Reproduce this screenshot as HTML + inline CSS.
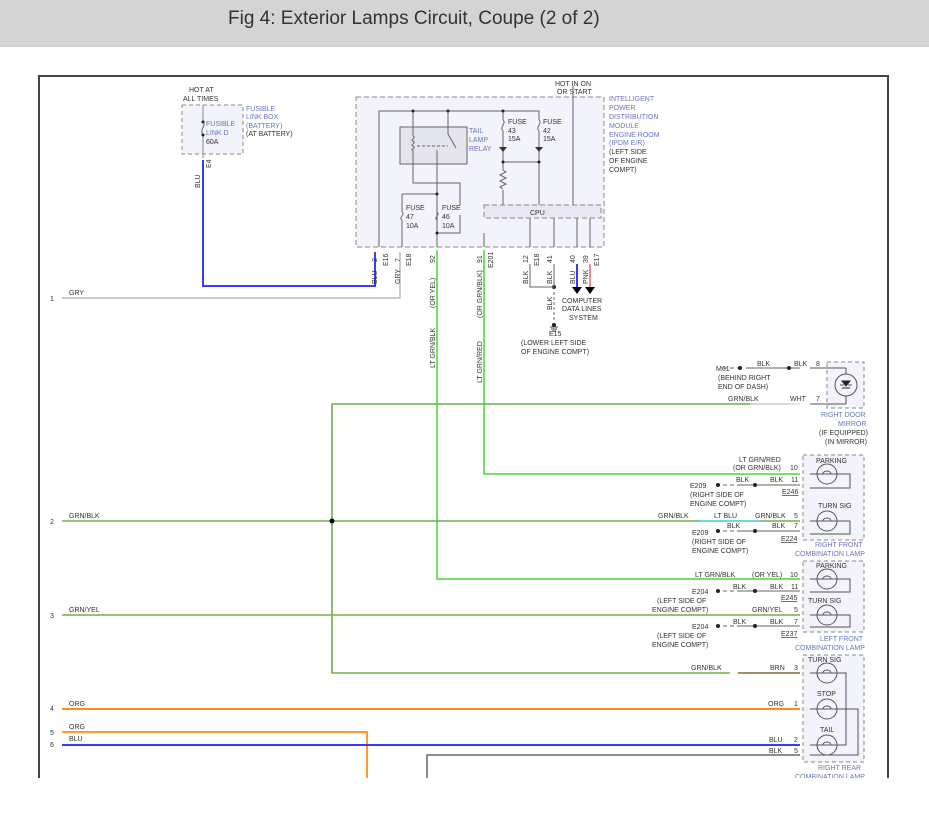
<!DOCTYPE html>
<html><head><meta charset="utf-8"><style>
body{margin:0;background:#fff;width:929px;height:814px;overflow:hidden;font-family:"Liberation Sans",sans-serif}
.hd{position:absolute;left:0;top:0;width:929px;height:47px;background:#d4d4d4}
.hd span{position:absolute;left:228px;top:8px;font-size:19px;color:#333}
svg{position:absolute;left:0;top:0}
text{font-family:"Liberation Sans",sans-serif;font-size:7px;fill:#333}
.b{fill:#6677bb}
</style></head><body>
<div class="hd"><span>Fig 4: Exterior Lamps Circuit, Coupe (2 of 2)</span></div>
<svg width="929" height="814" viewBox="0 0 929 814">
<rect x="39" y="76" width="849" height="720" fill="none" stroke="#444" stroke-width="2"/>
<rect x="0" y="778" width="929" height="40" fill="#fff"/>
<!-- fusible link box -->
<rect x="182" y="105" width="61" height="49" fill="#f3f3fb" stroke="#888" stroke-dasharray="4,3"/>
<text x="189" y="92">HOT AT</text><text x="183" y="101">ALL TIMES</text>
<text class="b" x="246" y="111">FUSIBLE</text><text class="b" x="246" y="119">LINK BOX</text><text class="b" x="246" y="128">(BATTERY)</text><text x="246" y="136">(AT BATTERY)</text>
<text class="b" x="206" y="126">FUSIBLE</text><text class="b" x="206" y="135">LINK D</text><text x="206" y="144">60A</text>
<path d="M203 105V122M203 135V158" stroke="#888" fill="none"/>
<path d="M203 122c4 3 -4 7 0 13" stroke="#666" fill="none"/>
<circle cx="203" cy="122" r="1.5" fill="#222"/><circle cx="203" cy="135" r="1.5" fill="#222"/>
<path d="M203 160V286H375V252" stroke="#3a3aff" stroke-width="2" fill="none"/>
<text x="0" y="0" transform="translate(200,188) rotate(-90)">BLU</text>
<text x="0" y="0" transform="translate(211,168) rotate(-90)">E4</text>
<!-- GRY -->
<path d="M62 298H400V252" stroke="#bbb" stroke-width="1.5" fill="none"/>
<text x="50" y="301">1</text><text x="69" y="295">GRY</text>
<!-- IPDM -->
<rect x="356" y="97" width="248" height="150" fill="#f3f3fb" stroke="#888" stroke-dasharray="5,3"/>
<text x="555" y="86">HOT IN ON</text><text x="557" y="94">OR START</text>
<text class="b" x="609" y="101">INTELLIGENT</text><text class="b" x="609" y="110">POWER</text><text class="b" x="609" y="119">DISTRIBUTION</text><text class="b" x="609" y="128">MODULE</text><text class="b" x="609" y="137">ENGINE ROOM</text><text class="b" x="609" y="145">(IPDM E/R)</text><text x="609" y="154">(LEFT SIDE</text><text x="609" y="163">OF ENGINE</text><text x="609" y="172">COMPT)</text>
<rect x="400" y="127" width="67" height="37" fill="#e4e4ee" stroke="#666"/>
<g stroke="#666" fill="none">
<path d="M379 247V111H539V120M539 131V205M413 111V136M413 150V183H460V205M448 111V134M503 111V120M503 131V170M503 190V205M573 86V205M503 162H539"/>
<path d="M413 136c4 2 -4 4 0 5c4 2 -4 4 0 5c4 2 -4 4 0 4"/>
<path d="M417 146H448" stroke-dasharray="3,2"/>
<path d="M448 134L456 148"/>
<path d="M437 150V194M437 183"/>
<path d="M503 170l3 2l-6 3l6 3l-6 3l6 3l-6 3l3 2"/>
<path d="M402 194H437V247M402 194V212M402 220V247M437 194V212M437 220V233M437 233H460V215M530 218V247M554 218V247M577 218V247M590 218V247M484 233V247"/>
<path d="M503 120c4 3 -4 7 0 11M539 120c4 3 -4 7 0 11M402 212c4 3 -4 5 0 8M437 212c4 3 -4 5 0 8"/>
</g>
<path d="M499 147h8l-4 5zM535 147h8l-4 5z" fill="#333"/>
<rect x="484" y="205" width="117" height="13" fill="#e8e8f4" stroke="#888" stroke-dasharray="5,3"/>
<text x="530" y="215">CPU</text>
<text class="b" x="469" y="133">TAIL</text><text class="b" x="469" y="142">LAMP</text><text class="b" x="469" y="151">RELAY</text>
<text x="508" y="124">FUSE</text><text x="508" y="133">43</text><text x="508" y="141">15A</text>
<text x="543" y="124">FUSE</text><text x="543" y="133">42</text><text x="543" y="141">15A</text>
<text x="406" y="210">FUSE</text><text x="406" y="219">47</text><text x="406" y="228">10A</text>
<text x="442" y="210">FUSE</text><text x="442" y="219">46</text><text x="442" y="228">10A</text>
<g fill="#222"><circle cx="413" cy="111" r="1.5"/><circle cx="448" cy="111" r="1.5"/><circle cx="503" cy="111" r="1.5"/><circle cx="437" cy="194" r="1.5"/><circle cx="437" cy="233" r="1.5"/><circle cx="554" cy="287" r="2"/><circle cx="554" cy="325" r="2"/><circle cx="503" cy="162" r="1.5"/><circle cx="539" cy="162" r="1.5"/></g>
<g font-size="7">
<text transform="translate(377,262) rotate(-90)">2</text><text transform="translate(388,266) rotate(-90)">E16</text>
<text transform="translate(400,262) rotate(-90)">7</text><text transform="translate(411,266) rotate(-90)">E18</text>
<text transform="translate(435,263) rotate(-90)">92</text>
<text transform="translate(482,263) rotate(-90)">91</text><text transform="translate(493,268) rotate(-90)">E201</text>
<text transform="translate(528,263) rotate(-90)">12</text><text transform="translate(539,266) rotate(-90)">E18</text>
<text transform="translate(552,263) rotate(-90)">41</text><text transform="translate(575,263) rotate(-90)">40</text>
<text transform="translate(588,263) rotate(-90)">39</text><text transform="translate(599,266) rotate(-90)">E17</text>
<text transform="translate(377,284) rotate(-90)">BLU</text><text transform="translate(400,284) rotate(-90)">GRY</text>
<text transform="translate(435,308) rotate(-90)">(OR YEL)</text><text transform="translate(482,318) rotate(-90)">(OR GRN/BLK)</text>
<text transform="translate(435,368) rotate(-90)">LT GRN/BLK</text><text transform="translate(482,383) rotate(-90)">LT GRN/RED</text>
<text transform="translate(528,284) rotate(-90)">BLK</text><text transform="translate(552,284) rotate(-90)">BLK</text>
<text transform="translate(575,284) rotate(-90)">BLU</text><text transform="translate(588,284) rotate(-90)">PNK</text>
<text transform="translate(552,310) rotate(-90)">BLK</text>
</g>
<path d="M530 264V287H554M554 264V287" stroke="#666" fill="none"/>
<path d="M554 292V320" stroke="#666" stroke-dasharray="3,2"/>
<path d="M550 327h8M551 329h6M552 331h4" stroke="#444"/>
<path d="M577 264V287" stroke="#3a3aff" stroke-width="2"/><path d="M590 264V287" stroke="#f08ca0" stroke-width="2"/>
<path d="M572 287h10l-5 7zM585 287h10l-5 7z" fill="#000"/>
<text x="562" y="303">COMPUTER</text><text x="562" y="311">DATA LINES</text><text x="569" y="320">SYSTEM</text>
<text x="549" y="336">E15</text><text x="521" y="345">(LOWER LEFT SIDE</text><text x="521" y="354">OF ENGINE COMPT)</text>
<!-- green wires -->
<path d="M437 250V579H800" stroke="#66dd55" stroke-width="1.8" fill="none"/>
<path d="M484 250V474H800" stroke="#66dd55" stroke-width="1.8" fill="none"/>
<path d="M332 404V673H730M332 404H790M62 521H800M62 615H800" stroke="#6bb04a" stroke-width="1.6" fill="none"/>
<circle cx="332" cy="521" r="2.5" fill="#000"/>
<path d="M738 673H800" stroke="#8a6a30" stroke-width="1.5"/>
<path d="M62 709H800" stroke="#ff8c1a" stroke-width="2"/>
<path d="M62 732H367V778" stroke="#ff9a33" stroke-width="2" fill="none"/>
<path d="M62 745H800" stroke="#3a3aff" stroke-width="2"/>
<path d="M427 778V755H800" stroke="#666" stroke-width="1.5" fill="none"/>
<g>
<text x="50" y="524">2</text><text x="69" y="518">GRN/BLK</text>
<text x="50" y="618">3</text><text x="69" y="612">GRN/YEL</text>
<text x="50" y="711">4</text><text x="69" y="706">ORG</text>
<text x="50" y="735">5</text><text x="69" y="729">ORG</text>
<text x="50" y="747">6</text><text x="69" y="741">BLU</text>
</g>
<!-- right side -->
<g stroke="#666" fill="none">
<path d="M746 368H800M740 485H800M740 531H800M740 591H800M740 626H800"/>
<path d="M723 368h20M723 485h20M723 531h20M723 591h20M723 626h20" stroke-dasharray="4,3"/>
</g>
<path d="M750 404H800" stroke="#ddd" stroke-width="1.5"/>
<path d="M700 521H760" stroke="#55ddee" stroke-width="1.5"/>
<g fill="#222"><circle cx="789" cy="368" r="2"/><circle cx="755" cy="485" r="2"/><circle cx="755" cy="531" r="2"/><circle cx="755" cy="591" r="2"/><circle cx="755" cy="626" r="2"/><circle cx="740" cy="368" r="2"/><circle cx="718" cy="485" r="2"/><circle cx="718" cy="531" r="2"/><circle cx="718" cy="591" r="2"/><circle cx="718" cy="626" r="2"/></g>
<g fill="#f3f3fb" stroke="#888" stroke-dasharray="4,3">
<rect x="827" y="362" width="37" height="46"/><rect x="803" y="455" width="61" height="85"/><rect x="803" y="561" width="61" height="71"/><rect x="803" y="655" width="61" height="107"/>
</g>
<g fill="none" stroke="#555">
<circle cx="846" cy="385" r="11"/><path d="M846 368V374M846 396V404M810 368H846M810 404H846M840 385h4M848 385h4"/>
<circle cx="827" cy="474" r="10"/><circle cx="827" cy="521" r="10"/><circle cx="827" cy="579" r="10"/><circle cx="827" cy="615" r="10"/>
<circle cx="827" cy="673" r="10"/><circle cx="827" cy="709" r="10"/><circle cx="827" cy="745" r="10"/>
<path d="M818 474h5c0-4 8-4 8 0h5M818 521h5c0-4 8-4 8 0h5M818 579h5c0-4 8-4 8 0h5M818 615h5c0-4 8-4 8 0h5M818 673h5c0-4 8-4 8 0h5M818 709h5c0-4 8-4 8 0h5M818 745h5c0-4 8-4 8 0h5"/>
<path d="M810 474H850V488H810M810 521H850V534H810M810 579H850V592H810M810 615H850V627H810"/>
<path d="M810 673H846V745H810M810 709H858V755H810"/>
</g>
<path d="M842 381l4 5l4-5zM842 388h8" fill="#222" stroke="#222"/>
<g>
<text x="757" y="366">BLK</text><text x="794" y="366">BLK</text><text x="816" y="366">8</text>
<text x="716" y="371">M61</text><text x="718" y="380">(BEHIND RIGHT</text><text x="718" y="389">END OF DASH)</text>
<text x="728" y="401">GRN/BLK</text><text x="790" y="401">WHT</text><text x="816" y="401">7</text>
<text class="b" x="821" y="417">RIGHT DOOR</text><text class="b" x="838" y="426">MIRROR</text><text x="819" y="435">(IF EQUIPPED)</text><text x="825" y="444">(IN MIRROR)</text>
<text x="739" y="462">LT GRN/RED</text><text x="733" y="470">(OR GRN/BLK)</text><text x="790" y="470">10</text>
<text x="816" y="463">PARKING</text>
<text x="736" y="482">BLK</text><text x="770" y="482">BLK</text><text x="791" y="482">11</text>
<text x="690" y="488">E209</text><text x="690" y="497">(RIGHT SIDE OF</text><text x="690" y="506">ENGINE COMPT)</text><text x="782" y="494" text-decoration="underline">E246</text>
<text x="818" y="508">TURN SIG</text>
<text x="658" y="518">GRN/BLK</text><text x="714" y="518">LT BLU</text><text x="755" y="518">GRN/BLK</text><text x="794" y="518">5</text>
<text x="727" y="528">BLK</text><text x="772" y="528">BLK</text><text x="794" y="528">7</text>
<text x="692" y="535">E209</text><text x="692" y="544">(RIGHT SIDE OF</text><text x="692" y="553">ENGINE COMPT)</text><text x="781" y="541" text-decoration="underline">E224</text>
<text class="b" x="815" y="547">RIGHT FRONT</text><text class="b" x="795" y="556">COMBINATION LAMP</text>
<text x="816" y="568">PARKING</text>
<text x="695" y="577">LT GRN/BLK</text><text x="752" y="577">(OR YEL)</text><text x="790" y="577">10</text>
<text x="733" y="589">BLK</text><text x="770" y="589">BLK</text><text x="791" y="589">11</text>
<text x="692" y="594">E204</text><text x="657" y="603">(LEFT SIDE OF</text><text x="652" y="612">ENGINE COMPT)</text><text x="781" y="600" text-decoration="underline">E245</text>
<text x="808" y="603">TURN SIG</text>
<text x="752" y="612">GRN/YEL</text><text x="794" y="612">5</text>
<text x="733" y="624">BLK</text><text x="770" y="624">BLK</text><text x="794" y="624">7</text>
<text x="692" y="629">E204</text><text x="657" y="638">(LEFT SIDE OF</text><text x="652" y="647">ENGINE COMPT)</text><text x="781" y="636" text-decoration="underline">E237</text>
<text class="b" x="820" y="641">LEFT FRONT</text><text class="b" x="795" y="650">COMBINATION LAMP</text>
<text x="808" y="662">TURN SIG</text>
<text x="691" y="670">GRN/BLK</text><text x="770" y="670">BRN</text><text x="794" y="670">3</text>
<text x="817" y="696">STOP</text>
<text x="768" y="706">ORG</text><text x="794" y="706">1</text>
<text x="820" y="732">TAIL</text>
<text x="769" y="742">BLU</text><text x="794" y="742">2</text>
<text x="769" y="753">BLK</text><text x="794" y="753">5</text>
<text class="b" x="818" y="770">RIGHT REAR</text><text class="b" x="795" y="779">COMBINATION LAMP</text>
</g>
<rect x="0" y="778" width="929" height="40" fill="#fff"/>
</svg>
</body></html>
